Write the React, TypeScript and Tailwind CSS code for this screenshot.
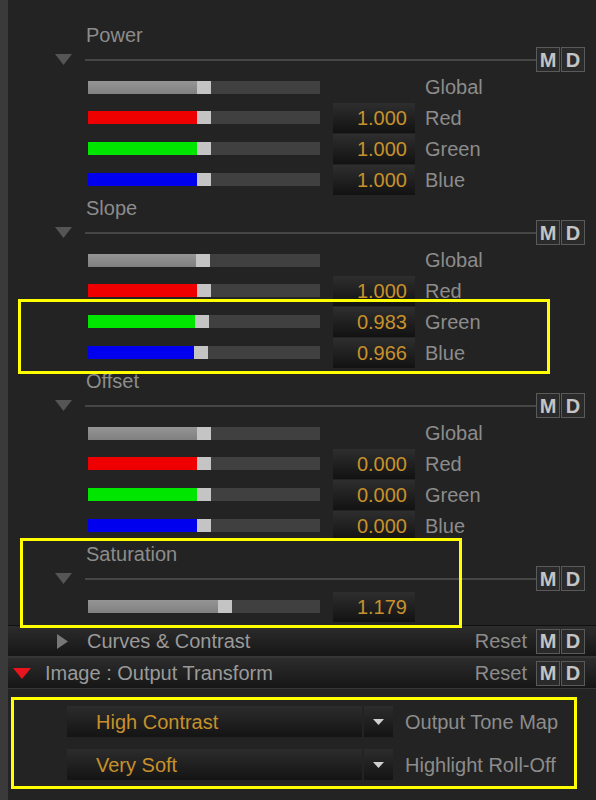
import React from "react";

const TXT = "text-[#8c8c8c]";

function MD() {
  return (
    <div className="flex gap-[1px] shrink-0">
      <div className="w-[24px] h-[25px] border border-[#5a5a5a] bg-[#2a2a2a] flex items-center justify-center font-bold text-[20px] leading-none text-[#c4c4c4]">
        M
      </div>
      <div className="w-[24px] h-[25px] border border-[#5a5a5a] bg-[#2a2a2a] flex items-center justify-center font-bold text-[20px] leading-none text-[#c4c4c4]">
        D
      </div>
    </div>
  );
}

function Slider({ pos, color }: { pos: number; color: string }) {
  return (
    <div className="w-[232px] h-[13px] bg-[#404040] flex shrink-0">
      <div className="h-full" style={{ width: pos, background: color }} />
      <div className="w-[14px] h-full bg-[#c4c4c4]" />
    </div>
  );
}

function ValueBox({ v }: { v?: string }) {
  if (!v) return <div className="w-[82px] h-[30px] shrink-0" />;
  return (
    <div className="w-[82px] h-[30px] shrink-0 bg-[linear-gradient(to_bottom,#2e2e2e,#121212)] flex items-center justify-end pr-[8px] text-[20px] leading-none text-[#c8912b]">
      {v}
    </div>
  );
}

const GRAY = "linear-gradient(to bottom,#959595,#808080)";
const RED = "#ee0000";
const GREEN = "#00e600";
const BLUE = "#0000ee";

type Row = { label?: string; color: string; pos: number; value?: string; h: number };

function LineRow() {
  return (
    <div className="h-[25px] flex items-center">
      <svg width="17" height="11" viewBox="0 0 17 11" className="ml-[47px] shrink-0">
        <polygon points="0,0 17,0 8.5,11" fill="#555555" />
      </svg>
      <div className="ml-[13px] flex-1 h-[2px] bg-[#464646]" />
      <div className="mr-[11px]">
        <MD />
      </div>
    </div>
  );
}

function Section({ title, rows }: { title: string; rows: Row[] }) {
  return (
    <div className="flex flex-col">
      <div className={`h-[25px] flex items-center pl-[78px] text-[20px] leading-none ${TXT}`}>{title}</div>
      <LineRow />
      {rows.map((r, i) => (
        <div key={i} className="flex items-center" style={{ height: r.h }}>
          <div className="ml-[80px]">
            <Slider pos={r.pos} color={r.color} />
          </div>
          <div className="ml-[13px]">
            <ValueBox v={r.value} />
          </div>
          {r.label && <div className={`ml-[10px] text-[20px] leading-none ${TXT}`}>{r.label}</div>}
        </div>
      ))}
    </div>
  );
}

function Header({ children, icon, pl }: { children: React.ReactNode; icon: React.ReactNode; pl: string }) {
  return (
    <div className="h-[30px] flex items-center bg-[linear-gradient(to_bottom,#2c2c2c,#161616)]">
      <div className={pl}>{icon}</div>
      <div className="text-[20px] leading-none text-[#9a9a9a]">{children}</div>
      <div className="flex-1" />
      <div className="text-[20px] leading-none text-[#8c8c8c] mr-[9px]">Reset</div>
      <div className="mr-[11px]">
        <MD />
      </div>
    </div>
  );
}

function Dropdown({ value, label }: { value: string; label: string }) {
  return (
    <div className="h-[31px] flex items-center">
      <div className="ml-[59px] w-[295px] h-[31px] bg-[linear-gradient(to_bottom,#2c2c2c,#141414)] flex items-center pl-[29px] text-[20px] leading-none text-[#c8912b]">
        {value}
      </div>
      <div className="ml-[2px] w-[29px] h-[31px] bg-[linear-gradient(to_bottom,#2c2c2c,#141414)] flex items-center justify-center">
        <svg width="11" height="6" viewBox="0 0 11 6">
          <polygon points="0,0 11,0 5.5,6" fill="#d0d0d0" />
        </svg>
      </div>
      <div className={`ml-[12px] text-[20px] leading-none ${TXT}`}>{label}</div>
    </div>
  );
}

export default function App() {
  const std = (vals: (string | undefined)[], pos: number[]): Row[] => [
    { label: "Global", color: GRAY, pos: pos[0], value: vals[0], h: 30 },
    { label: "Red", color: RED, pos: pos[1], value: vals[1], h: 31 },
    { label: "Green", color: GREEN, pos: pos[2], value: vals[2], h: 31 },
    { label: "Blue", color: BLUE, pos: pos[3], value: vals[3], h: 31 },
  ];
  return (
    <div className="w-[596px] h-[800px] bg-[#232323] flex relative overflow-hidden font-['Liberation_Sans',Arial,sans-serif]">
      <div className="w-[8px] h-full bg-[#3a3a3a] shrink-0" />
      <div className="flex-1 flex flex-col">
        <div className="pt-[22px] flex flex-col">
          <Section title="Power" rows={std([undefined, "1.000", "1.000", "1.000"], [109, 109, 109, 109])} />
          <Section title="Slope" rows={std([undefined, "1.000", "0.983", "0.966"], [108, 109, 107, 106])} />
          <Section title="Offset" rows={std([undefined, "0.000", "0.000", "0.000"], [109, 109, 109, 109])} />
          <div className="flex flex-col">
            <div className={`h-[25px] flex items-center pl-[78px] text-[20px] leading-none ${TXT}`}>Saturation</div>
            <LineRow />
            <div className="h-[31px] flex items-center">
              <div className="ml-[80px]">
                <Slider pos={130} color={GRAY} />
              </div>
              <div className="ml-[13px]">
                <ValueBox v="1.179" />
              </div>
            </div>
          </div>
        </div>
        <div className="h-[3px]" />
        <div className="h-[1px] bg-[#111111]" />
        <Header
          pl="ml-[49px] mr-[19px]"
          icon={
            <svg width="11" height="15" viewBox="0 0 11 15" className="block">
              <polygon points="0,0 11,7.5 0,15" fill="#777777" />
            </svg>
          }
        >
          Curves &amp; Contrast
        </Header>
        <div className="h-[2px] bg-[#363636]" />
        <Header
          pl="ml-[5px] mr-[14px]"
          icon={
            <svg width="18" height="11" viewBox="0 0 18 11" className="block">
              <polygon points="0,0 18,0 9,11" fill="#e8141e" />
            </svg>
          }
        >
          Image : Output Transform
        </Header>
        <div className="h-[1px] bg-[#363636]" />
        <div className="flex-1 bg-[#232323] flex flex-col pt-[17px] gap-[12px]">
          <Dropdown value="High Contrast" label="Output Tone Map" />
          <Dropdown value="Very Soft" label="Highlight Roll-Off" />
        </div>
      </div>

      <div className="absolute left-[18px] top-[299px] w-[532px] h-[75px] border-[3px] border-[#ffff00] pointer-events-none" />
      <div className="absolute left-[20px] top-[538px] w-[442px] h-[90px] border-[3px] border-[#ffff00] pointer-events-none" />
      <div className="absolute left-[11px] top-[697px] w-[566px] h-[92px] border-[3px] border-[#ffff00] pointer-events-none" />
    </div>
  );
}
